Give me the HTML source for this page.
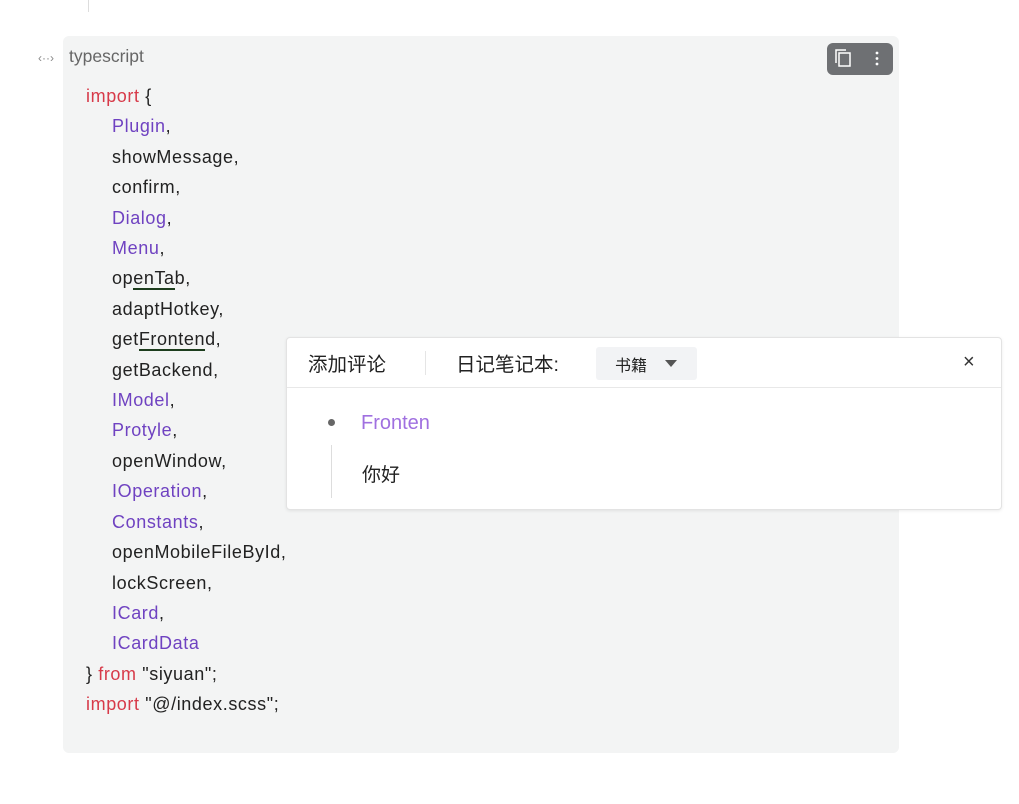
<!DOCTYPE html>
<html><head><meta charset="utf-8"><style>
body{margin:0;width:1019px;height:804px;background:#fff;position:relative;overflow:hidden;font-family:"Liberation Sans","Noto Sans CJK SC",sans-serif}
.vline{position:absolute;left:88px;top:0;width:1px;height:12px;background:#ddd}
.block{position:absolute;left:63px;top:36px;width:836px;height:717px;background:#f3f4f4;border-radius:6px}
.lang{position:absolute;left:69px;top:46px;font-size:17.5px;color:#666}
.fold{position:absolute;left:38px;top:51px;font-size:12px;color:#888}
.btns{position:absolute;left:827px;top:43px;width:66px;height:32px;background:#6e7073;border-radius:6px}
.code{position:absolute;left:86px;top:81px;font-size:18px;line-height:30.4px;color:#222;white-space:pre;letter-spacing:0.6px}
.i{display:inline-block;width:26px}
.k{color:#d73a49}.p{color:#6f42c1}
.u{border-bottom:2px solid #1d3d1d}
.pop{position:absolute;left:286px;top:337px;width:714px;height:171px;background:#fff;border:1px solid #e3e3e3;border-radius:4px;box-shadow:0 1px 3px rgba(0,0,0,.08)}
.hd{height:49px;border-bottom:1px solid #e8e8e8;position:relative;font-size:19.5px;color:#222}
</style></head><body>
<div class="vline"></div>
<div class="block"></div>
<div class="fold">‹··›</div>
<div class="lang">typescript</div>
<div class="btns">
<svg width="66" height="32" style="position:absolute;left:0;top:0"><rect x="12" y="10" width="11" height="13" fill="none" stroke="#fff" stroke-width="1.5"/><path d="M9 20V7h10" fill="none" stroke="#fff" stroke-width="1.5"/><circle cx="50" cy="10" r="1.4" fill="#fff"/><circle cx="50" cy="15.5" r="1.4" fill="#fff"/><circle cx="50" cy="21" r="1.4" fill="#fff"/></svg>
</div>
<div class="code"><span class="k">import</span> {
<span class="i"></span><span class="p">Plugin</span>,
<span class="i"></span>showMessage,
<span class="i"></span>confirm,
<span class="i"></span><span class="p">Dialog</span>,
<span class="i"></span><span class="p">Menu</span>,
<span class="i"></span>op<span class="u">enTa</span>b,
<span class="i"></span>adaptHotkey,
<span class="i"></span>get<span class="u">Fronten</span>d,
<span class="i"></span>getBackend,
<span class="i"></span><span class="p">IModel</span>,
<span class="i"></span><span class="p">Protyle</span>,
<span class="i"></span>openWindow,
<span class="i"></span><span class="p">IOperation</span>,
<span class="i"></span><span class="p">Constants</span>,
<span class="i"></span>openMobileFileById,
<span class="i"></span>lockScreen,
<span class="i"></span><span class="p">ICard</span>,
<span class="i"></span><span class="p">ICardData</span>
} <span class="k">from</span> "siyuan";
<span class="k">import</span> "@/index.scss";</div>
<div class="pop">
<div class="hd">
<span style="position:absolute;left:21px;top:10px">添加评论</span>
<div style="position:absolute;left:138px;top:13px;width:1px;height:24px;background:#e5e5e5"></div>
<span style="position:absolute;left:169px;top:10px">日记笔记本:</span>
<div style="position:absolute;left:309px;top:9px;width:101px;height:33px;background:#f2f3f5;border-radius:3px;font-size:16px">
<span style="position:absolute;left:19px;top:5px">书籍</span>
<span style="position:absolute;left:69px;top:13px;width:0;height:0;border-left:6px solid transparent;border-right:6px solid transparent;border-top:7px solid #555"></span>
</div>
<span style="position:absolute;left:676px;top:13px;font-size:20px;color:#333">×</span>
</div>
<div style="position:absolute;left:41px;top:81px;width:7px;height:7px;border-radius:50%;background:#666"></div>
<div style="position:absolute;left:74px;top:74px;font-size:20px;color:#a070e0">Fronten</div>
<div style="position:absolute;left:44px;top:107px;width:1px;height:53px;background:#ddd"></div>
<div style="position:absolute;left:75px;top:122px;font-size:19px;color:#222">你好</div>
</div>
</body></html>
